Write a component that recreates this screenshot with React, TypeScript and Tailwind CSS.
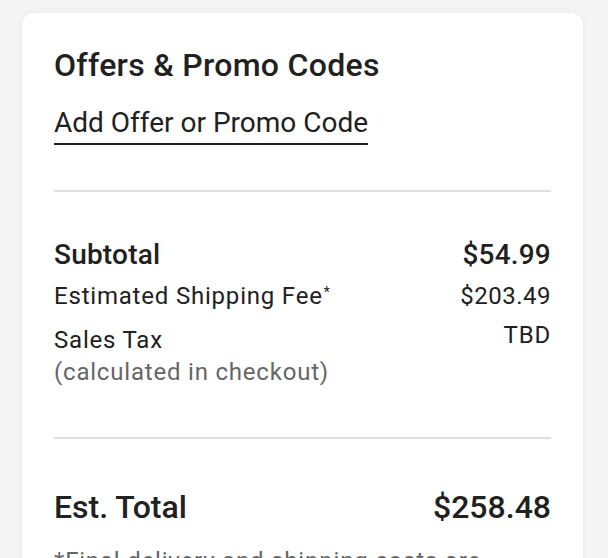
export default function App() {
  return (
    <div className="min-h-screen bg-[#f5f5f5] px-[22px] pt-[13px] font-['Roboto',sans-serif] text-[#212121]">
      <div className="w-[561px] rounded-[12px] bg-white px-8 pt-8 pb-8 shadow-[0_0_8px_rgba(0,0,0,0.06)]">
        <h2 className="text-[32px] leading-[40px] font-medium tracking-[0.3px]">Offers &amp; Promo Codes</h2>
        <button className="mt-[20px] border-b-2 border-[#212121] pb-[2px] text-[28px] leading-[36px]">
          Add Offer or Promo Code
        </button>
        <div className="mt-[45px] h-[2px] bg-[#e0e0e0]" />

        <div className="mt-[45px] flex flex-col">
          <div className="flex items-baseline justify-between">
            <span className="text-[28px] leading-[36px] font-medium tracking-[0.2px]">Subtotal</span>
            <span className="text-[28px] leading-[36px] font-medium tracking-[0.2px]">$54.99</span>
          </div>
          <div className="mt-[7px] flex items-baseline justify-between">
            <span className="text-[24px] leading-[32px] tracking-[0.8px]">
              Estimated Shipping Fee<sup className="ml-[1px] text-[14px]">*</sup>
            </span>
            <span className="text-[24px] leading-[32px] tracking-[0.5px]">$203.49</span>
          </div>
          <div className="mt-[12px] flex justify-between">
            <div className="flex flex-col">
              <span className="text-[24px] leading-[32px] tracking-[0.8px]">Sales Tax</span>
              <span className="text-[24px] leading-[32px] tracking-[0.8px] text-[#666666]">(calculated in checkout)</span>
            </div>
            <span className="text-[24px] leading-[22px] tracking-[0.8px]">TBD</span>
          </div>
        </div>

        <div className="mt-[49px] h-[2px] bg-[#e0e0e0]" />

        <div className="mt-[48px] flex items-baseline justify-between">
          <span className="text-[32px] leading-[40px] font-medium">Est. Total</span>
          <span className="text-[32px] leading-[40px] font-medium">$258.48</span>
        </div>
        <p className="mt-[18px] text-[24px] leading-[32px] tracking-[0.8px] text-[#666666]">
          *Final delivery and shipping costs are calculated during checkout.
        </p>
      </div>
    </div>
  );
}
